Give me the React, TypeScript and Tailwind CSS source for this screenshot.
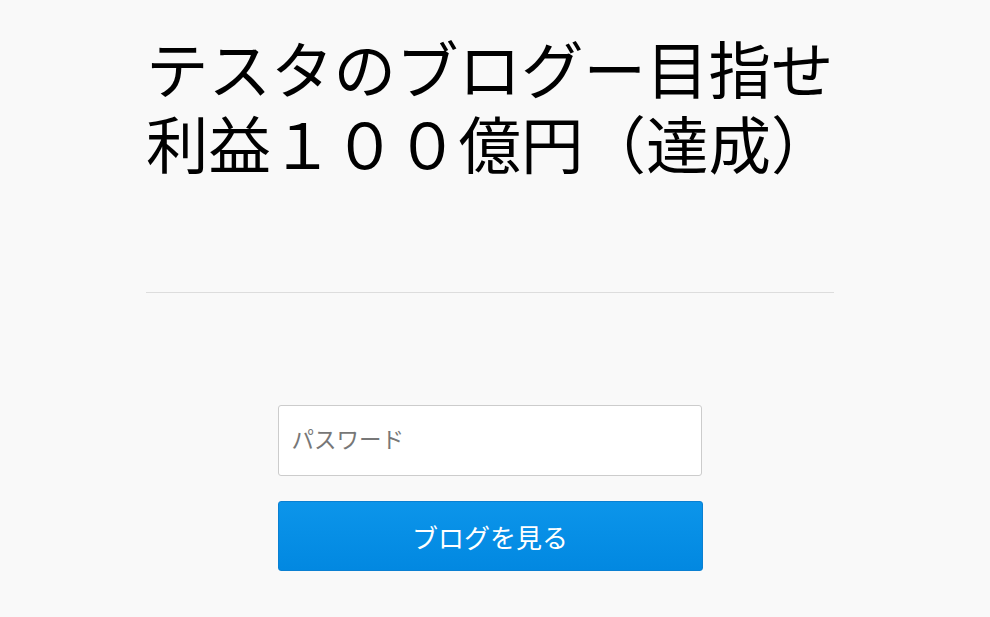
import { useState } from "react";

const JP = "font-['Noto_Sans_CJK_JP','Noto_Sans',sans-serif]";

export default function App() {
  const [password, setPassword] = useState("");

  return (
    <div className={`min-h-screen bg-[#f9f9f9] text-black ${JP}`}>
      <div className="flex justify-center pr-[10px]">
        <div className="w-[688px]">
          <h1 className="whitespace-nowrap pt-[29px] text-[62.5px] leading-[75px] font-normal">
            テスタのブログー目指せ
            <br />
            利益１００億円（達成）
          </h1>
          <hr className="mt-[113px] border-t border-[#dddddd]" />

          <form
            className="mx-auto mt-[112px] flex w-[425px] flex-col gap-[25px]"
            onSubmit={(e) => e.preventDefault()}
          >
            <input
              type="password"
              value={password}
              onChange={(e) => setPassword(e.target.value)}
              placeholder="パスワード"
              className="h-[71px] w-[424px] rounded-[3px] border border-[#cccccc] bg-white px-[13px] pb-[5px] text-[22.5px] text-[#333] placeholder:text-[#777] outline-none"
            />
            <button
              type="submit"
              className="h-[70px] w-[425px] rounded-[3px] border border-[#0a80d2] bg-gradient-to-b from-[#0c95ea] to-[#0288e1] text-[26px] text-white"
            >
              ブログを見る
            </button>
          </form>
        </div>
      </div>
    </div>
  );
}
